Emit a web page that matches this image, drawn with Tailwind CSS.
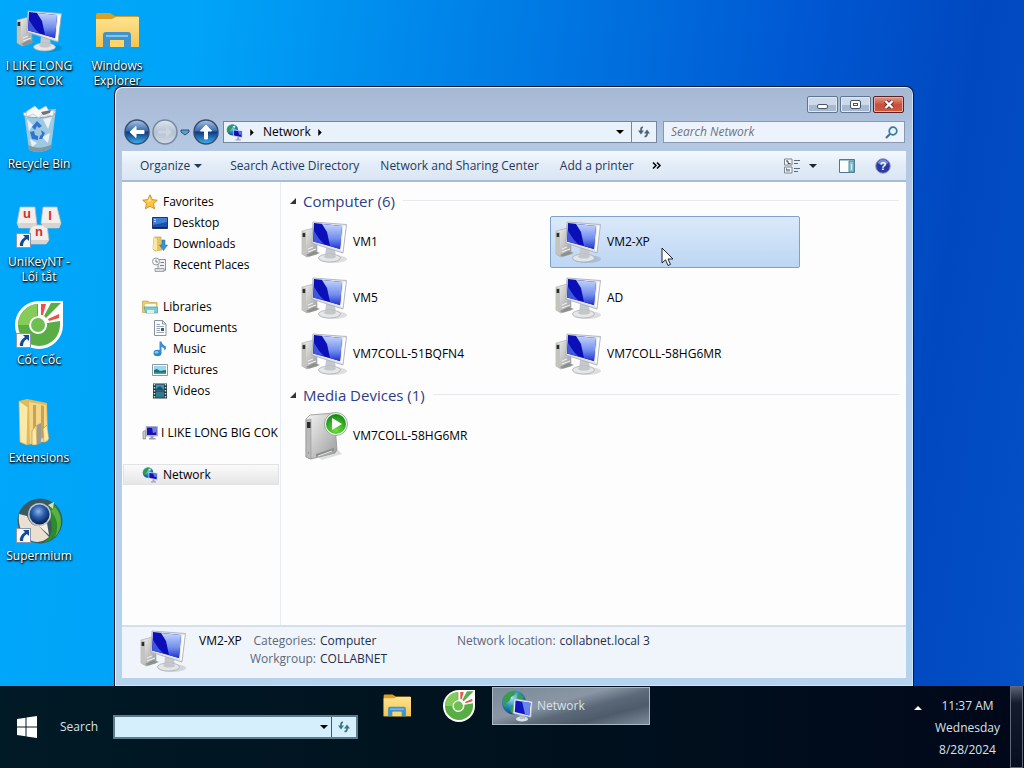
<!DOCTYPE html>
<html lang="en">

<head>
    <meta charset="UTF-8" />
    <title>Network</title>
    <meta name="viewport" content="width=device-width, initial-scale=1.0" />
    <script src="https://cdn.jsdelivr.net/npm/@tailwindcss/browser@4"></script>
</head>

<body class="h-screen flex flex-col overflow-hidden font-['Open_Sans','Noto_Sans',sans-serif] text-xs text-black">

    <!-- Shared icons (zero size instead of hidden, so the gradients keep working) -->
    <svg class="absolute size-0">
        <defs>
            <linearGradient id="screenLight" x1="0" y1="0" x2="0" y2="1">
                <stop offset="0" stop-color="#c3d4fb" />
                <stop offset=".6" stop-color="#6f8bee" />
                <stop offset="1" stop-color="#2030cc" />
            </linearGradient>
            <linearGradient id="metal" x1="0" y1="0" x2="1" y2="1">
                <stop offset="0" stop-color="#f6f6f4" />
                <stop offset="1" stop-color="#9a9c9c" />
            </linearGradient>
            <linearGradient id="orb" x1="0" y1="0" x2="0" y2="1">
                <stop offset="0" stop-color="#a9c4e4" />
                <stop offset=".45" stop-color="#3a6cae" />
                <stop offset=".5" stop-color="#0c3a80" />
                <stop offset="1" stop-color="#3fb4f4" />
            </linearGradient>
            <linearGradient id="orbOff" x1="0" y1="0" x2="0" y2="1">
                <stop offset="0" stop-color="#dfe7f0" />
                <stop offset=".5" stop-color="#b3c1d1" />
                <stop offset="1" stop-color="#d3dce7" />
            </linearGradient>
            <linearGradient id="yellow" x1="0" y1="0" x2="0" y2="1">
                <stop offset="0" stop-color="#ffe391" />
                <stop offset="1" stop-color="#f3c54f" />
            </linearGradient>
            <radialGradient id="earth" cx=".4" cy=".3" r=".7">
                <stop offset="0" stop-color="#a5ecf4" />
                <stop offset=".5" stop-color="#2b93c6" />
                <stop offset="1" stop-color="#0d4a86" />
            </radialGradient>
            <radialGradient id="ball" cx=".45" cy=".35" r=".6">
                <stop offset="0" stop-color="#8fb6ea" />
                <stop offset=".5" stop-color="#2c5fae" />
                <stop offset="1" stop-color="#0d2458" />
            </radialGradient>
            <radialGradient id="play" cx=".5" cy=".8" r=".8">
                <stop offset="0" stop-color="#6be038" />
                <stop offset="1" stop-color="#12851a" />
            </radialGradient>
        </defs>

        <symbol id="pc" viewBox="0 0 48 48">
            <ellipse cx="33" cy="41" rx="14" ry="4" fill="#000" opacity=".12" />
            <path d="M2 13 6 12 17 9V36L7 39 2 36Z" fill="url(#metal)" stroke="#a5a5a0" stroke-width=".6" />
            <path d="M2 13 6 14V37L2 35Z" fill="#c4c4be" />
            <rect x="2.600" y="15" width="2.600" height="4" fill="#26302c" />
            <path d="M6 37 14 33 20 35 9 38.500Z" fill="#8d908c" />
            <path d="M8 34 16 31M8 31 13 29" stroke="#f4f4f4" />
            <path d="M26 29 35 31 36 40H25Z" fill="#c6c9cc" />
            <ellipse cx="29.500" cy="40" rx="11" ry="4" fill="#e4e6e8" stroke="#a9adb2" stroke-width=".8" />
            <ellipse cx="30" cy="38.500" rx="6" ry="2" fill="#c3c7cb" />
            <path d="M13 4 46.500 6.500 43 35 12 25Z" fill="#e3e6ec" stroke="#a4aab8" stroke-width=".8" />
            <path d="M14 5 42 8 40 31 13 23.500Z" fill="#0a0fb8" />
            <path d="M22 6 42 8 40 31 30 28 27 14Z" fill="url(#screenLight)" />
            <path d="M14 13 20 22 24 26 13 23.500Z" fill="#4058dc" />
            <path d="M43.500 8 45.500 8.300 42.500 33 41 32.500Z" fill="#fff" />
        </symbol>

        <symbol id="pcSmall" viewBox="0 0 16 16">
            <path d="M1 6.500 3.500 5.500V14H1Z" fill="#c9c9cc" stroke="#85858c" stroke-width=".7" />
            <path d="M4 1.500H15.500V11H4Z" fill="#c0c6dc" stroke="#8d93b0" stroke-width=".6" />
            <path d="M5 2.500H14.500V10H5Z" fill="#1a14b0" />
            <path d="M10 2.500H14.500V7L11 8Z" fill="#6f7fe6" />
            <path d="M8.500 11H11.500V13H13.500V14.500H7V13H8.500Z" fill="#9a9ca8" />
        </symbol>

        <symbol id="net" viewBox="0 0 16 16">
            <circle cx="6" cy="5.500" r="5.300" fill="url(#earth)" />
            <path d="M2 3C4 0 8 .5 9 1.500 7 3 6 3 5 5 3 6 3 8 2.500 8 1 7 1 5 2 3Z" fill="#2d9a50" />
            <path d="M6 2 9 1.500 8 4Z" fill="#c9f4f4" />
            <path d="M6.500 5 15.500 6V13.500L6.500 11.500Z" fill="#ccd4ee" />
            <path d="M7.300 6 14.700 6.800V12.300L7.300 10.800Z" fill="#120fb4" />
            <path d="M11 6.400 14.700 6.800V10L12.500 10Z" fill="#5d78e6" />
            <path d="M10.500 12.500H12.500V14.300H14V15.500H9V14.300H10.500Z" fill="#a2a8b8" />
        </symbol>

        <symbol id="explorer" viewBox="0 0 44 36">
            <path d="M1 2Q1 0 3 0H15L20 3H42Q44 3 44 5V34H1Z" fill="#dc9f20" />
            <path d="M1 6H17L21 4H44V34H1Z" fill="url(#yellow)" />
            <path d="M8 34V22Q8 19 11 19H33Q36 19 36 22V34H29V27H15V34Z" fill="#3f93cf" />
            <path d="M11 22H33V24H11Z" fill="#86c2e6" />
            <path d="M15 27H29V34H15Z" fill="#ffd766" />
        </symbol>

        <symbol id="coccoc" viewBox="0 0 48 48">
            <path d="M24 0H48V24A24 24 0 1 1 24 0Z" fill="#fff" />
            <path d="M23 3A21 21 0 1 0 45 24V20L32 22A9 9 0 0 1 32 25 9 9 0 1 1 23 15Z" fill="#58ae45" />
            <path d="M22 3A21 21 0 0 0 3 24H14A9 9 0 0 1 22 15Z" fill="#86cc58" />
            <circle cx="23" cy="24" r="7" fill="#6cbf50" />
            <path d="M26 3H31L28 14H26Z" fill="#ee5147" />
            <path d="M36 2H46L31 17 29 15Z" fill="#58ae45" />
            <path d="M44 13V17L34 20 33 18Z" fill="#ee5147" />
        </symbol>

        <symbol id="shortcut" viewBox="0 0 15 15">
            <path d="M0 0H15V15H0Z" fill="#8b98a8" />
            <path d="M1 1H14V14H1Z" fill="#f7f8fa" />
            <path d="M7 2H13V8L11 6Q7 8 7 13H4Q3 8 9 4Z" fill="#144a94" />
        </symbol>

        <symbol id="refresh" viewBox="0 0 14 14">
            <path d="M6 2.500Q4 2 4 5V7M10 6.500V9Q10 11.500 7.500 11.500" fill="none" stroke="currentColor" stroke-width="1.700" />
            <path d="M1 5.500H7L4 9.500ZM7 8.500H13L10 4.500Z" fill="currentColor" />
        </symbol>

        <symbol id="down" viewBox="0 0 8 4">
            <path d="M0 0H8L4 4Z" fill="currentColor" />
        </symbol>

        <symbol id="right" viewBox="0 0 4 8">
            <path d="M0 0V8L4 4Z" fill="currentColor" />
        </symbol>
    </svg>

    <!-- Desktop -->
    <main class="relative flex-1 bg-[linear-gradient(98deg,#00a8fa_0%,#00a4f8_18%,#0082e8_42%,#0058d2_72%,#0048c0_88%,#0450c6_100%)]">

        <!-- Desktop shortcuts -->
        <div class="grid grid-flow-col grid-rows-[repeat(6,98px)] auto-cols-[78px] justify-start pt-[7px] text-white text-center leading-[15px] [text-shadow:1px_1px_2px_#000,0_1px_2px_#000]">
            <a href="#" class="flex flex-col items-center gap-[3px]">
                <svg class="size-12"><use href="#pc" /></svg>
                I LIKE LONG<br>BIG COK
            </a>
            <a href="#" class="flex flex-col items-center gap-[3px]">
                <svg class="size-12" viewBox="0 0 48 48">
                    <path d="M9 7 41 4 36 43Q25 50 14 45Z" fill="#b9cfdf" opacity=".85" />
                    <path d="M8 8Q24 2 41 6L39 10Q24 15 9 11Z" fill="#eef2f5" stroke="#8fa3b2" />
                    <path d="M12 6 20 1 24 5 31 1 34 6 39 5 38 11 27 9 24 13 18 9 11 12Z" fill="#f7f8f9" stroke="#b8c0c6" stroke-width=".7" />
                    <path d="M26 7 36 5 35 8 28 10Z" fill="#6f7478" />
                    <path d="M12 14 18 20 14 26ZM28 14 37 12 33 24ZM27 32 35 28 33 38ZM15 34 22 38 17 42Z" fill="#eaf1f6" />
                    <path d="M17 22 22 16 27 21 24 23 22 21 20 25ZM15 27 19 26 20 30 23 31V35L17 34ZM26 25 30 28 27 34 24 34 25 31 27 29Z" fill="#2f74d0" />
                    <path d="M13 40Q24 46 37 39L36 43Q25 50 14 45Z" fill="#8397a2" />
                </svg>
                Recycle Bin
            </a>
            <a href="#" class="flex flex-col items-center gap-[3px]">
                <svg class="size-12" viewBox="0 0 48 48">
                    <g fill="#f1eeec" stroke="#bcb4b2" stroke-width=".8">
                        <path d="M5 4H20L22 22 16 25H4L2 20Z" />
                        <path d="M28 4H42L46 20 44 25H30L26 20Z" />
                        <path d="M16 22H32L34 37 31 41H15L13 37Z" />
                    </g>
                    <g fill="#d9d4d2">
                        <path d="M2 20H22L16 25H4Z" />
                        <path d="M26 20H46L44 25H30Z" />
                        <path d="M13 37H34L31 41H15Z" />
                    </g>
                    <g class="[text-shadow:none]" fill="#dd2a2a" font-family="Liberation Sans" font-weight="bold" font-size="13" text-anchor="middle">
                        <text x="12" y="15">u</text>
                        <text x="35" y="17">I</text>
                        <text x="24" y="33">n</text>
                    </g>
                    <use href="#shortcut" x="1" y="30" width="15" height="15" />
                </svg>
                UniKeyNT -<br>Lối tắt
            </a>
            <a href="#" class="flex flex-col items-center gap-[3px]">
                <svg class="size-12" viewBox="0 0 48 48">
                    <use href="#coccoc" width="48" height="48" />
                    <use href="#shortcut" x="1" y="32" width="15" height="15" />
                </svg>
                Cốc Cốc
            </a>
            <a href="#" class="flex flex-col items-center gap-[3px]">
                <svg class="size-12" viewBox="0 0 48 48">
                    <path d="M4 2 12 0 32 4 33 42 12 46 5 43Z" fill="#e3b95a" />
                    <path d="M14 3 31 6 33 42 15 45Z" fill="#f2d68a" />
                    <path d="M18 6 21 6V40L18 42ZM26 6 29 7V38L26 40Z" fill="#caa350" />
                    <path d="M4 2 13 8 12 46 5 43Z" fill="#fbe9a8" stroke="#d5ab4c" stroke-width=".7" />
                    <path d="M17 32 21 26 22 46 17 46ZM28 30 32 26 34 40 29 44Z" fill="#fbe9a8" stroke="#b58e3c" stroke-width=".6" />
                    <path d="M22 26 26 24V44L22 46Z" fill="#9a9c9c" />
                </svg>
                Extensions
            </a>
            <a href="#" class="flex flex-col items-center gap-[3px]">
                <svg class="size-12" viewBox="0 0 48 48">
                    <circle cx="25" cy="24" r="22.500" fill="#3b5962" />
                    <path d="M36 5A22.500 22.500 0 0 1 28 46Q42 36 34 20Z" fill="#2c8a2f" />
                    <path d="M40 10A22 22 0 0 1 40 40Q46 26 36 14Z" fill="#57b23f" />
                    <path d="M4 17 12 19Q15 29 24 29L34 40Q26 47 17 44 2 36 4 17Z" fill="#eadfd0" />
                    <path d="M24 29 32 26 34 38Z" fill="#f6f0e4" />
                    <circle cx="24.500" cy="17.500" r="11.500" fill="#b8c6cf" />
                    <circle cx="24.500" cy="17.500" r="10" fill="url(#ball)" />
                    <path d="M33 8 39 5 38 12Z" fill="#cfe4b4" />
                    <use href="#shortcut" x="1" y="31" width="15" height="15" />
                </svg>
                Supermium
            </a>
            <a href="#" class="flex flex-col items-center gap-[3px]">
                <span class="flex h-12 items-center"><svg class="h-9 w-11"><use href="#explorer" /></svg></span>
                Windows<br>Explorer
            </a>
        </div>

        <!-- Explorer window -->
        <section class="absolute left-[114px] right-[110px] top-[86px] bottom-0 flex flex-col rounded-t-lg border border-b-0 border-[#101c34] bg-linear-to-b from-[#a6b8d2] via-[#b4c8e4] via-10% to-[#b5d3ee] px-[7px] pb-2 shadow-[inset_1px_1px_0_#e4f0fa,inset_-1px_-1px_0_#cfe6f6]">

            <!-- Window buttons -->
            <div class="flex justify-end gap-0.5 pt-[9px] pr-0.5">
                <button type="button" aria-label="Minimize" class="flex h-[17px] w-[31px] items-end justify-center rounded-xs border border-[#5f7590] bg-linear-to-b from-[#ccdaea] from-50% to-[#a5b9d2] to-50% pb-[3px] shadow-[inset_0_0_0_1px_#dde8f4]">
                    <span class="h-[5px] w-[11px] rounded-xs border border-[#4c5566] bg-white"></span>
                </button>
                <button type="button" aria-label="Maximize" class="flex h-[17px] w-[31px] items-center justify-center rounded-xs border border-[#5f7590] bg-linear-to-b from-[#ccdaea] from-50% to-[#a5b9d2] to-50% shadow-[inset_0_0_0_1px_#dde8f4]">
                    <span class="flex h-[9px] w-[11px] items-center justify-center rounded-xs border border-[#4c5566] bg-white"><span class="h-[3px] w-[5px] border border-[#4c5566]"></span></span>
                </button>
                <button type="button" aria-label="Close" class="flex h-[17px] w-[31px] items-center justify-center rounded-xs border border-[#5a2026] bg-linear-to-b from-[#e09a8c] via-[#c9503c] via-50% to-[#cf5a3c] shadow-[inset_0_0_0_1px_#e8b0a4]">
                    <svg class="h-[9px] w-3" viewBox="0 0 12 9"><path d="M2.500 1 9.500 8M9.500 1 2.500 8" stroke="#5a3030" stroke-width="4" /><path d="M2.500 1 9.500 8M9.500 1 2.500 8" stroke="#fff" stroke-width="2.400" /></svg>
                </button>
            </div>

            <!-- Address row -->
            <div class="flex items-center py-1.5 pr-px pl-0.5">
                <button type="button" aria-label="Back">
                    <svg class="size-[26px]" viewBox="0 0 26 26"><circle cx="13" cy="13" r="12" fill="url(#orb)" stroke="#3a4d6e" stroke-width="1.500" /><path d="M6 13 12 7.500V11.500H20V14.500H12V18.500Z" fill="#fff" stroke="#fff" stroke-linejoin="round" /></svg>
                </button>
                <button type="button" aria-label="Forward" class="ml-0.5">
                    <svg class="size-[26px]" viewBox="0 0 26 26"><circle cx="13" cy="13" r="12" fill="url(#orbOff)" stroke="#76869c" stroke-width="1.500" /><path d="M20 13 14 7.500V11.500H6V14.500H14V18.500Z" fill="#ccd6e2" /></svg>
                </button>
                <button type="button" aria-label="Recent pages" class="ml-0.5">
                    <svg class="h-[7px] w-2.5" viewBox="0 0 10 7"><path d="M1 1H9V3L5 6 1 3Z" fill="#5f9ec9" stroke="#28507e" /></svg>
                </button>
                <button type="button" aria-label="Up" class="ml-[3px]">
                    <svg class="size-[26px]" viewBox="0 0 26 26"><circle cx="13" cy="13" r="12" fill="url(#orb)" stroke="#3a4d6e" stroke-width="1.500" /><path d="M13 6 18.500 12H14.500V20H11.500V12H7.500Z" fill="#fff" stroke="#fff" stroke-linejoin="round" /></svg>
                </button>
                <nav class="ml-1 flex h-[22px] flex-1 items-center border border-[#75879f] bg-[#e9f1fb]">
                    <svg class="ml-0.5 size-[17px]"><use href="#net" /></svg>
                    <svg class="ml-[7px] h-[7px] w-1"><use href="#right" /></svg>
                    <a href="#" class="ml-[9px]">Network</a>
                    <svg class="ml-[7px] h-[7px] w-1"><use href="#right" /></svg>
                    <button type="button" aria-label="Previous locations" class="ml-auto mr-[7px]"><svg class="h-1 w-2"><use href="#down" /></svg></button>
                    <button type="button" aria-label="Refresh" class="flex h-full w-[25px] items-center justify-center border-l border-[#75879f] text-[#4b6478]"><svg class="size-3.5"><use href="#refresh" /></svg></button>
                </nav>
                <div class="ml-1.5 flex h-[22px] w-[242px] items-center border border-[#8798b0] bg-[#edf3fc] pr-1.5">
                    <input type="text" aria-label="Search Network" placeholder="Search Network" class="min-w-0 flex-1 bg-transparent pl-[7px] italic outline-none placeholder:text-[#6f747c]" />
                    <svg class="size-[13px]" viewBox="0 0 13 13"><circle cx="8" cy="5" r="3.800" fill="#e4f4fb" stroke="#39779e" stroke-width="1.700" /><path d="M5 8 1 12" stroke="#4a6f96" stroke-width="2.200" /></svg>
                </div>
            </div>

            <div class="flex min-h-0 flex-1 flex-col bg-[#fdfdfd]">
                <!-- Command bar -->
                <div class="flex h-[31px] shrink-0 items-center border-b-2 border-[#a9bcd4] bg-linear-to-b from-[#f4fafe] via-[#e3edf8] via-45% to-[#dbe6f4] pl-[18px] pr-[15px] text-[#1e395b]">
                    <button type="button" class="flex items-center gap-1">Organize <svg class="h-1 w-2"><use href="#down" /></svg></button>
                    <button type="button" class="ml-7">Search Active Directory</button>
                    <button type="button" class="ml-[21px]">Network and Sharing Center</button>
                    <button type="button" class="ml-[21px]">Add a printer</button>
                    <button type="button" aria-label="More commands" class="ml-[18px] text-black">
                        <svg class="h-[7px] w-[9px]" viewBox="0 0 9 7"><path d="M1 .5 4 3.500 1 6.500M5 .5 8 3.500 5 6.500" fill="none" stroke="currentColor" stroke-width="1.500" /></svg>
                    </button>
                    <button type="button" aria-label="Change your view" class="ml-auto">
                        <svg class="size-4" viewBox="0 0 16 16"><path d="M.5 1H8V7H.5ZM.5 9H8V15H.5Z" fill="#f4f6f8" stroke="#7c868f" /><path d="M2 3H4V5.500H6.500M2 11H3V13.500M5 11V13.500" fill="none" stroke="#39424e" /><path d="M10 2.500H16M10 5.500H14M10 10.500H16M10 13.500H14" stroke="#5d6a78" /></svg>
                    </button>
                    <button type="button" aria-label="More views" class="ml-[9px] text-[#1d2430]"><svg class="h-1 w-2"><use href="#down" /></svg></button>
                    <button type="button" aria-label="Show the preview pane" class="ml-[22px]">
                        <svg class="size-4" viewBox="0 0 16 16"><path d="M.5 1.500H15.500V14.500H.5Z" fill="#fbfdfd" stroke="#4f7890" /><path d="M1 2.500H15" stroke="#a9c6d2" /><path d="M10 3H15V14H10Z" fill="#8ec4d0" stroke="#4f8ca0" /><path d="M12.500 6V12" stroke="#d6f0f4" /></svg>
                    </button>
                    <button type="button" aria-label="Get help" class="ml-5">
                        <svg class="size-4" viewBox="0 0 16 16"><circle cx="8" cy="8" r="7.300" fill="#2b3a9e" stroke="#8e9ad0" /><path d="M2.500 5A6 6 0 0 1 13.500 5Q8 8 2.500 5Z" fill="#7d8cd6" /><text x="8" y="12" font-family="Liberation Sans" font-weight="bold" font-size="11" text-anchor="middle" fill="#fff">?</text></svg>
                    </button>
                </div>

                <div class="flex min-h-0 flex-1">
                    <!-- Navigation pane -->
                    <nav class="w-[159px] shrink-0 whitespace-nowrap border-r border-[#e6ebf4] pt-[9px] leading-[21px]">
                        <ul>
                            <li><a href="#" class="flex items-center gap-[5px] pl-5">
                                <svg class="size-4" viewBox="0 0 16 16"><path d="M8 .8 10.200 5.600 15.300 6.200 11.500 9.600 12.600 14.800 8 12.200 3.400 14.800 4.500 9.600 .7 6.200 5.800 5.600Z" fill="#fcc63c" stroke="#d58320" stroke-width=".9" /><path d="M8 3 9 7 5 8Z" fill="#ffeb9c" /></svg>
                                Favorites</a></li>
                            <li><a href="#" class="flex items-center gap-[5px] pl-[30px]">
                                <svg class="size-4" viewBox="0 0 16 16"><path d="M.5 2.500H15.500V13.500H.5Z" fill="#1c4fae" stroke="#23385f" /><path d="M1 3H15V7L1 10Z" fill="#3f7fd8" /><path d="M2 4.500H4M2 6.500H4" stroke="#c8e8f4" /><path d="M1 12.500H15" stroke="#16284a" /></svg>
                                Desktop</a></li>
                            <li><a href="#" class="flex items-center gap-[5px] pl-[30px]">
                                <svg class="size-4" viewBox="0 0 16 16"><path d="M2 1H9L10 14 3 15 1 13Z" fill="#e6c463" stroke="#c49c3c" stroke-width=".6" /><path d="M2 1 5 3V15L1 13Z" fill="#f9e7a4" /><path d="M10 4H13V9H15.500L11.500 14.500 7.500 9H10Z" fill="#3c92cc" stroke="#236896" stroke-width=".5" /></svg>
                                Downloads</a></li>
                            <li><a href="#" class="flex items-center gap-[5px] pl-[30px]">
                                <svg class="size-4" viewBox="0 0 16 16"><path d="M6 2.500H13.500V13.500H6Z" fill="#eef0f2" stroke="#8e949c" /><path d="M3 11.500H12V14.500H3Z" fill="#dadde2" stroke="#8e949c" stroke-width=".8" /><circle cx="4" cy="4.500" r="3.500" fill="#f6f7f8" stroke="#959ba4" /><path d="M4 2.500V5H6M8.500 5.500H12M8 8.500H12" fill="none" stroke="#7a8088" /></svg>
                                Recent Places</a></li>
                        </ul>
                        <ul class="mt-[21px]">
                            <li><a href="#" class="flex items-center gap-[5px] pl-5">
                                <svg class="size-4" viewBox="0 0 16 16"><path d="M.5 2H6L7 3.500H15V13.500H.5Z" fill="#efc968" stroke="#c9a04a" stroke-width=".7" /><path d="M3 5H14V8H3Z" fill="#fffbe8" /><path d="M2 8H15.500V14H4Z" fill="#7ccbd4" stroke="#4ea0b4" stroke-width=".7" /><path d="M5 11H12V14H5Z" fill="#d9f2f0" /></svg>
                                Libraries</a></li>
                            <li><a href="#" class="flex items-center gap-[5px] pl-[30px]">
                                <svg class="size-4" viewBox="0 0 16 16"><path d="M2.500 .5H10.500L14 4V15.500H2.500Z" fill="#fbfcfd" stroke="#8a94a0" /><path d="M10.500 .5V4H14" fill="none" stroke="#8a94a0" /><path d="M4.500 4.500H8M4.500 6.500H12M4.500 8.500H8M4.500 10.500H8M4.500 12.500H12" stroke="#9aa6b4" /><path d="M9 8H12V11H9Z" fill="#3a5a70" /></svg>
                                Documents</a></li>
                            <li><a href="#" class="flex items-center gap-[5px] pl-[30px]">
                                <svg class="size-4" viewBox="0 0 16 16"><ellipse cx="5.500" cy="12" rx="4" ry="3.200" fill="#2e88cc" /><path d="M7.500 .5H9.500Q10 3.500 14 5.500 14.500 8 12.500 9.500 12.500 6.500 9.500 6V12H7.500Z" fill="#3d8fd0" /><ellipse cx="4.500" cy="11.300" rx="1.800" ry="1.200" fill="#8cc8ee" /></svg>
                                Music</a></li>
                            <li><a href="#" class="flex items-center gap-[5px] pl-[30px]">
                                <svg class="size-4" viewBox="0 0 16 16"><path d="M.5 2.500H15.500V13.500H.5Z" fill="#fff" stroke="#8a9aa4" /><path d="M2 4H14V12H2Z" fill="#9ad8ea" /><path d="M2 8 5 7 8 9 14 8V12H2Z" fill="#1f6c7c" /><path d="M2 10.500H14V12H2Z" fill="#44a49c" /></svg>
                                Pictures</a></li>
                            <li><a href="#" class="flex items-center gap-[5px] pl-[30px]">
                                <svg class="size-4" viewBox="0 0 16 16"><path d="M1 .5H15V15.500H1Z" fill="#1f3a40" /><path d="M4 1.500H12V7.500H4Z" fill="#4a8fb4" /><path d="M4 8.500H12V14.500H4Z" fill="#2f7a8c" /><path d="M5 5 8 3 12 7H4Z" fill="#1d4f70" /><path d="M2.500 1V15M13.500 1V15" stroke="#c4e4dc" stroke-width="1.400" stroke-dasharray="1.500 1.500" /></svg>
                                Videos</a></li>
                        </ul>
                        <a href="#" class="mt-[21px] flex items-center gap-[3px] pl-5">
                            <svg class="size-4"><use href="#pcSmall" /></svg>
                            I LIKE LONG BIG COK</a>
                        <a href="#" class="mx-px mt-[21px] flex h-[21px] items-center gap-[5px] border border-[#e2e2e4] bg-linear-to-b from-[#fafafa] to-[#e6e6e7] pl-[18px]">
                            <svg class="size-4"><use href="#net" /></svg>
                            Network</a>
                    </nav>

                    <!-- File list -->
                    <div class="min-w-0 flex-1 pl-[9px] pr-[7px] pt-2">
                        <h2 class="flex h-[21px] items-center text-[15px] text-[#2c3f8a]">
                            <svg class="mr-[7px] size-1.5" viewBox="0 0 6 6"><path d="M6 0V6H0Z" fill="#333" /></svg>
                            Computer (6)
                            <span class="ml-2 h-px flex-1 bg-[#e6eaec]"></span>
                        </h2>
                        <ul class="ml-1.5 mt-[5px] grid grid-cols-[repeat(2,250px)] gap-1">
                            <li><a href="#" class="flex h-[52px] items-center gap-[5px] pl-1"><svg class="size-12"><use href="#pc" /></svg>VM1</a></li>
                            <li><a href="#" class="relative flex h-[52px] items-center gap-[5px] rounded-xs border border-[#7da2ce] bg-linear-to-b from-[#dbe9f9] to-[#bdd6f4] pl-[3px]"><svg class="size-12"><use href="#pc" /></svg>VM2-XP
                                <!-- Mouse pointer -->
                                <svg class="absolute left-[110px] top-[30px] h-5 w-[13px]" viewBox="0 0 13 20"><path d="M1 1V16L4.500 12.800 7 18.500 9.500 17.400 7 12H12Z" fill="#fff" stroke="#1c2430" /></svg>
                            </a></li>
                            <li><a href="#" class="flex h-[52px] items-center gap-[5px] pl-1"><svg class="size-12"><use href="#pc" /></svg>VM5</a></li>
                            <li><a href="#" class="flex h-[52px] items-center gap-[5px] pl-1"><svg class="size-12"><use href="#pc" /></svg>AD</a></li>
                            <li><a href="#" class="flex h-[52px] items-center gap-[5px] pl-1"><svg class="size-12"><use href="#pc" /></svg>VM7COLL-51BQFN4</a></li>
                            <li><a href="#" class="flex h-[52px] items-center gap-[5px] pl-1"><svg class="size-12"><use href="#pc" /></svg>VM7COLL-58HG6MR</a></li>
                        </ul>
                        <h2 class="mt-1 flex h-[21px] items-center text-[15px] text-[#2c3f8a]">
                            <svg class="mr-[7px] size-1.5" viewBox="0 0 6 6"><path d="M6 0V6H0Z" fill="#333" /></svg>
                            Media Devices (1)
                            <span class="ml-2 h-px flex-1 bg-[#e6eaec]"></span>
                        </h2>
                        <ul class="ml-1.5 mt-[5px]">
                            <li><a href="#" class="flex h-[52px] items-center gap-[5px] pl-1">
                                <svg class="size-12" viewBox="0 0 48 48">
                                    <path d="M18 45 38 38 42 42 22 48Z" fill="#000" opacity=".12" />
                                    <path d="M6 7 10 3 34 1 37 38 35 41 11 47 6 45Z" fill="url(#metal)" stroke="#909290" stroke-width=".8" />
                                    <path d="M6 8 11 7V47L6 45Z" fill="#b9bab8" stroke="#8a8c8a" stroke-width=".5" />
                                    <rect x="7" y="10" width="3.500" height="6" fill="#2a2c2a" />
                                    <path d="M8 41H9" stroke="#777" />
                                    <path d="M16 42 34 36V39L16 45Z" fill="#8b8e8c" />
                                    <path d="M18 44 32 39" stroke="#e8e8e8" />
                                    <circle cx="36" cy="12" r="11.500" fill="#f2fbf0" stroke="#7e9a7e" stroke-width=".8" />
                                    <circle cx="36" cy="12" r="10" fill="url(#play)" />
                                    <path d="M32 6 42 12 32 18Z" fill="#fff" />
                                </svg>
                                VM7COLL-58HG6MR</a></li>
                        </ul>
                    </div>
                </div>

                <!-- Details pane -->
                <footer class="flex h-[53px] shrink-0 border-t-2 border-[#d5dfeb] bg-[#f0f5fc] pl-[17px] leading-[18px] text-[#1e2f4c]">
                    <svg class="size-12 shrink-0"><use href="#pc" /></svg>
                    <p class="ml-3 mt-[5px] w-[51px] text-black">VM2-XP</p>
                    <dl class="mt-[5px] grid w-[207px] grid-cols-[auto_1fr] content-start gap-x-1">
                        <dt class="text-right text-[#5a6779]">Categories:</dt>
                        <dd>Computer</dd>
                        <dt class="text-right text-[#5a6779]">Workgroup:</dt>
                        <dd>COLLABNET</dd>
                    </dl>
                    <dl class="mt-[5px] flex gap-1">
                        <dt class="text-[#5a6779]">Network location:</dt>
                        <dd>collabnet.local 3</dd>
                    </dl>
                </footer>
            </div>
        </section>
    </main>

    <!-- Taskbar -->
    <div class="flex h-[82px] shrink-0 items-start bg-linear-to-r from-[#001a26] via-[#00121e] via-50% to-[#00081a] text-[#d8e2ea]">
        <div class="flex h-full items-center pl-[17px]">
            <button type="button" aria-label="Start">
                <svg class="h-[22px] w-5" viewBox="0 0 20 22"><path d="M0 3 8.500 1.700V10.500H0ZM9.500 1.500 20 0V10.500H9.500ZM0 11.500H8.500V20.300L0 19ZM9.500 11.500H20V22L9.500 20.500Z" fill="#fff" /></svg>
            </button>
            <label for="taskSearch" class="ml-[23px] w-[53px]">Search</label>
            <div class="flex h-6 items-center border-2 border-[#5c7c8c] bg-[#d5effc] text-black">
                <input id="taskSearch" type="text" class="h-full w-[202px] bg-transparent px-1 outline-none" />
                <button type="button" aria-label="Recent searches" class="px-[3px]"><svg class="h-1 w-2"><use href="#down" /></svg></button>
                <button type="button" aria-label="Go" class="flex h-full w-[25px] items-center justify-center border-l border-[#3c5a6c] text-[#3a7484]"><svg class="size-3.5"><use href="#refresh" /></svg></button>
            </div>
        </div>
        <div class="flex items-center pl-[25px] pt-px">
            <button type="button" aria-label="Windows Explorer"><svg class="h-6 w-7"><use href="#explorer" /></svg></button>
            <button type="button" aria-label="Cốc Cốc" class="ml-8"><svg class="size-8"><use href="#coccoc" /></svg></button>
            <button type="button" class="ml-[17px] flex h-[38px] w-[158px] items-center gap-1 border border-[#aab8c4] bg-[linear-gradient(165deg,#7b8a99_0%,#8a96a4_40%,#5a6877_58%,#4d5b6b_75%,#7d8c9a_100%)] pl-2">
                <svg class="size-8" viewBox="0 0 32 32">
                    <circle cx="13" cy="12.500" r="12" fill="url(#earth)" />
                    <path d="M4 5Q9 0 15 1 15 5 10 7 10 11 5 13 6 17 3 17 0 10 4 5ZM10 15 14 17 12 24Q8 22 10 15ZM17 3 23 7 20 10 16 8Z" fill="#3c9a4c" />
                    <ellipse cx="21" cy="29" rx="6" ry="2.500" fill="#d9e2ea" />
                    <path d="M18 24 24 25V29H19Z" fill="#b4c0ca" />
                    <path d="M13 8.500 31.500 11.500 30 27.500 12 23.500Z" fill="#e4e9f2" stroke="#8d99ac" stroke-width=".6" />
                    <path d="M14.500 10.500 29.500 13 28.300 25.500 13.800 22Z" fill="#0f15c0" />
                    <path d="M21 11.600 29.500 13 28.300 25.500 24 24Z" fill="#6885ec" />
                </svg>
                Network
            </button>
        </div>
        <div class="ml-auto flex h-full items-start">
            <button type="button" aria-label="Show hidden icons" class="mt-5 rotate-180 text-white"><svg class="h-1 w-2"><use href="#down" /></svg></button>
            <div class="ml-[13px] mr-[10px] mt-[9px] text-center leading-[22px]">11:37 AM<br>Wednesday<br>8/28/2024</div>
            <button type="button" aria-label="Show desktop" class="mr-px h-full w-[13px] border border-[#5e6878] bg-linear-to-b from-[#5a6474] via-[#141c2c] via-20% to-[#080e1e]"></button>
        </div>
    </div>
</body>

</html>
